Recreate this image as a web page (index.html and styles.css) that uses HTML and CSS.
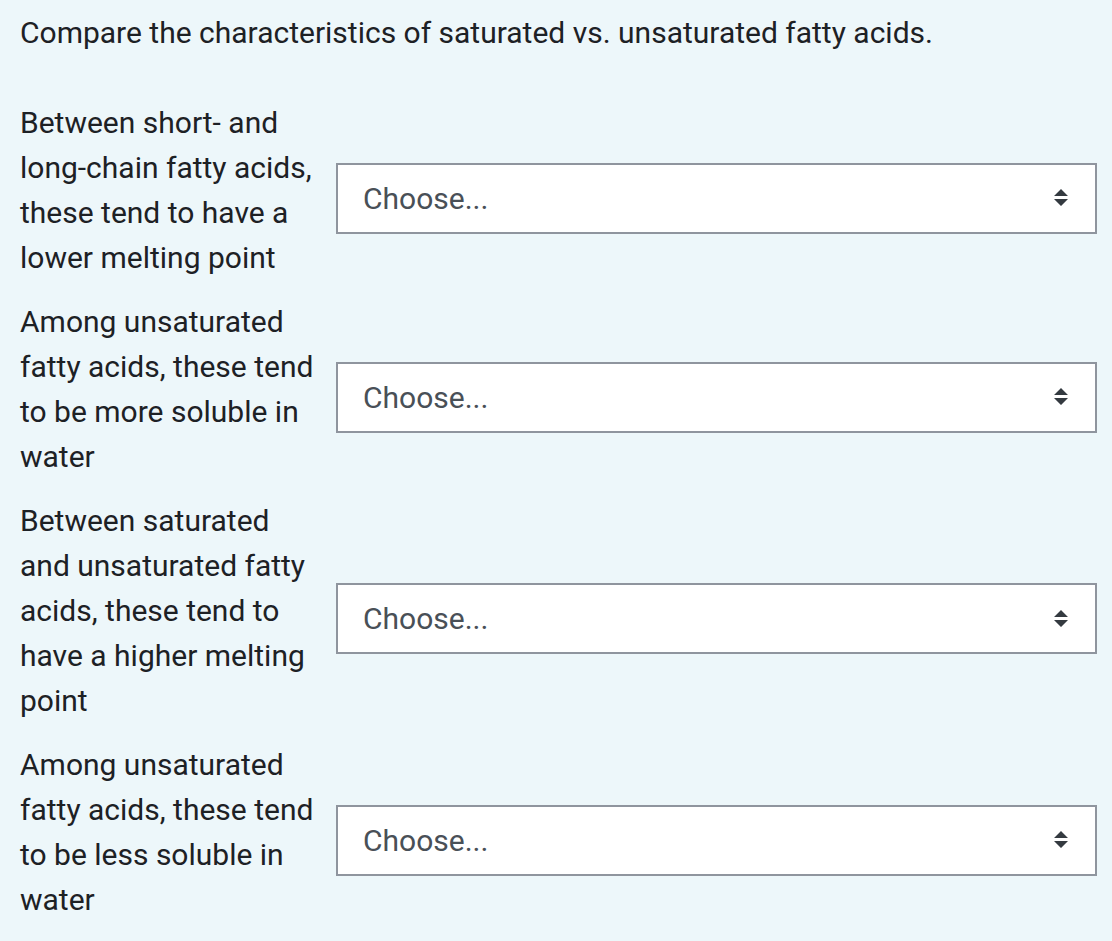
FILE: index.html
```html
<!DOCTYPE html>
<html>
<head>
<meta charset="utf-8">
<link rel="stylesheet" href="styles.css">
</head>
<body>
<div class="que">
  <div class="qtext">Compare the characteristics of saturated vs. unsaturated fatty acids.</div>
  <div class="rows">
    <div class="row">
      <div class="label">Between short- and long-chain fatty acids, these tend to have a lower melting point</div>
      <div class="select"><span>Choose...</span><svg class="arrow" width="16" height="20" viewBox="0 0 16 20"><path d="M8 1 L15 8 L1 8 Z M1 11 L15 11 L8 18 Z" fill="#343a40"/></svg></div>
    </div>
    <div class="row">
      <div class="label">Among unsaturated fatty acids, these tend to be more soluble in water</div>
      <div class="select"><span>Choose...</span><svg class="arrow" width="16" height="20" viewBox="0 0 16 20"><path d="M8 1 L15 8 L1 8 Z M1 11 L15 11 L8 18 Z" fill="#343a40"/></svg></div>
    </div>
    <div class="row">
      <div class="label">Between saturated and unsaturated fatty acids, these tend to have a higher melting point</div>
      <div class="select"><span>Choose...</span><svg class="arrow" width="16" height="20" viewBox="0 0 16 20"><path d="M8 1 L15 8 L1 8 Z M1 11 L15 11 L8 18 Z" fill="#343a40"/></svg></div>
    </div>
    <div class="row">
      <div class="label">Among unsaturated fatty acids, these tend to be less soluble in water</div>
      <div class="select"><span>Choose...</span><svg class="arrow" width="16" height="20" viewBox="0 0 16 20"><path d="M8 1 L15 8 L1 8 Z M1 11 L15 11 L8 18 Z" fill="#343a40"/></svg></div>
    </div>
  </div>
</div>
</body>
</html>
```
FILE: styles.css
```css
html, body {
  margin: 0;
  padding: 0;
  background: #edf7fa;
}
body {
  font-family: Roboto, "Liberation Sans", sans-serif;
  font-size: 30px;
  line-height: 45px;
  color: #1d2125;
}
.que {
  padding: 10px 15px 0 20px;
}
.qtext {
  margin-bottom: 45px;
}
.rows {
  display: flex;
  flex-direction: column;
  gap: 19px;
}
.row {
  display: flex;
  align-items: center;
}
.label {
  width: 300px;
  flex: 0 0 300px;
  margin-right: 16px;
}
.select {
  flex: 1;
  height: 71px;
  box-sizing: border-box;
  border: 2px solid #8f959e;
  background: #fff;
  display: flex;
  align-items: center;
  justify-content: space-between;
  padding: 0 26px 0 25px;
  color: #495057;
  margin-top: 16px;
}
.arrow {
  display: block;
}
```
